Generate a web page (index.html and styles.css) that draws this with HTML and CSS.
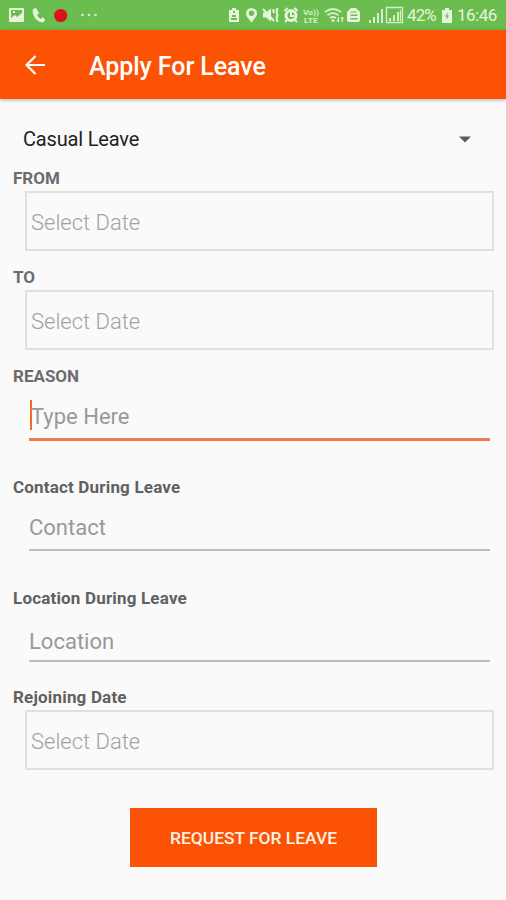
FILE: index.html
```
<!DOCTYPE html>
<html lang="en">
<head>
    <meta charset="UTF-8">
    <meta name="viewport" content="width=device-width, initial-scale=1.0">
    <title>Apply For Leave</title>
    <link rel="stylesheet" href="styles.css">
</head>
<body>
    <div class="statusbar">
        <svg class="status-icons" width="104" height="30" viewBox="0 0 104 30">
            <path fill="#e4f5dc" fill-rule="evenodd" d="M10 8h13a1 1 0 0 1 1 1v12a1 1 0 0 1-1 1H10a1 1 0 0 1-1-1V9a1 1 0 0 1 1-1zm1 2v8l4-3 2 2 5-4v-3zm2 1h2v2h-2z"/>
            <path fill="#e4f5dc" d="M33 9l3-1 3 5-2 2c1 2 2 3 4 4l2-2 2 3-1 2c-6 2-13-7-11-13z"/>
            <circle cx="60.7" cy="15.5" r="6.6" fill="#d9141e"/>
            <g fill="#d5efca"><circle cx="82.5" cy="15" r="1.3"/><circle cx="89" cy="15" r="1.3"/><circle cx="95.5" cy="15" r="1.3"/></g>
        </svg>
        <div class="status-right">
            <svg class="status-icons" width="180" height="30" viewBox="226 0 180 30">
                <!-- battery saver -->
                <path fill="#e4f5dc" fill-rule="evenodd" d="M232 8h4v2h3v12h-10V10h3zm1 3v2h2v-2zm-1 4v2h4v-2zm-1 3v2h6v-2z"/>
                <!-- location -->
                <path fill="#e4f5dc" fill-rule="evenodd" d="M251.5 8a5.5 5.5 0 0 1 5.500 5.500c0 3-3.500 6-5.500 9c-2-3-5.500-6-5.500-9a5.500 5.500 0 0 1 5.500-5.500zm0 2.500a2.700 2.700 0 1 0 0 5.400a2.700 2.700 0 0 0 0-5.400z"/>
                <!-- sound off -->
                <path fill="#e4f5dc" d="M263 12.500h3l5-4v13l-5-4h-3z"/>
                <path fill="none" stroke="#e4f5dc" stroke-width="2" d="M263 9l11 12M273.500 9v4M277.500 8l-1 4 1 3-1 3 1 4"/>
                <!-- alarm -->
                <circle cx="291" cy="15.500" r="5" fill="none" stroke="#e4f5dc" stroke-width="3"/>
                <path fill="none" stroke="#e4f5dc" stroke-width="2" d="M284.500 11l3-3M297.500 11l-3-3M287 20l-2 2M295 20l2 2M291 12v4h3"/>
                <text class="lte" x="303" y="14.500" textLength="16" lengthAdjust="spacingAndGlyphs">Vo))</text>
                <text class="lte" x="304" y="22.500" textLength="14" lengthAdjust="spacingAndGlyphs">LTE</text>
                <!-- wifi -->
                <path fill="none" stroke="#d5efca" stroke-width="1.800" d="M325 12q8-6 16 0M327.500 15.200q5.500-4 11 0M330 18q3-2 6 0"/>
                <circle cx="333" cy="20.500" r="1.500" fill="#d5efca"/>
                <path fill="none" stroke="#e4f5dc" stroke-width="1.200" d="M338.500 17v5M337 20l1.500 2M342 22v-5M343.500 19l-1.500-2"/>
                <!-- data saver -->
                <path fill="#e4f5dc" fill-rule="evenodd" d="M351 8h5l4 4v8a2 2 0 0 1-2 2h-9a2 2 0 0 1-2-2v-8zm-.5 3.500v1h6v-1zm0 3v1.500h7v-1.500zm0 3.500v1.500h7v-1.500z"/>
                <!-- signal -->
                <path fill="#d5efca" d="M369 20h2v3h-2zM373 17h2v6h-2zM377 13h2v10h-2zM381 9h2v14h-2zM389 18h2v3h-2zM393 15h2v6h-2zM397 12h2v9h-2z"/>
                <path fill="none" stroke="#d5efca" stroke-width="1.300" d="M386.500 7.500h16v15h-16zM400.500 10v11"/>
            </svg>
            <span class="percent">42%</span>
            <svg class="battery" width="10" height="15" viewBox="0 0 10 15">
                <path fill="#e4f5dc" fill-rule="evenodd" d="M3 0h4v2h3v13H0V2h3zm2.700 4L3 8.800h1.800L4.400 12 7 7.500H5.300z"/>
            </svg>
            <span class="clock">16:46</span>
        </div>
    </div>

    <header class="appbar">
        <svg class="back" width="20" height="20" viewBox="0 0 20 20">
            <path fill="none" stroke="#fff" stroke-width="2.200" d="M20 10H2M10.500 1L1.500 10l9 9"/>
        </svg>
        <h1>Apply For Leave</h1>
    </header>

    <main class="form">
        <div class="spinner">
            <span>Casual Leave</span>
            <svg width="12" height="7" viewBox="0 0 12 7"><path fill="#5c5c5c" d="M0 .5h12l-6 6z"/></svg>
        </div>

        <div class="field">
            <div class="label caps">FROM</div>
            <div class="datebox">Select Date</div>
        </div>
        <div class="field">
            <div class="label caps">TO</div>
            <div class="datebox">Select Date</div>
        </div>
        <div class="field reason">
            <div class="label caps">REASON</div>
            <div class="line active"><i class="caret"></i><span>Type Here</span></div>
        </div>
        <div class="field contact">
            <div class="label">Contact During Leave</div>
            <div class="line">Contact</div>
        </div>
        <div class="field location">
            <div class="label">Location During Leave</div>
            <div class="line">Location</div>
        </div>
        <div class="field rejoin">
            <div class="label">Rejoining Date</div>
            <div class="datebox">Select Date</div>
        </div>

        <button class="submit">REQUEST FOR LEAVE</button>
    </main>
</body>
</html>
```
FILE: styles.css
```
* {
    box-sizing: border-box;
}
body {
    margin: 0;
    height: 900px;
    overflow: hidden;
    background-color: #fafafa;
    font-family: Roboto, sans-serif;
}
.statusbar {
    display: flex;
    justify-content: space-between;
    height: 30px;
    background-color: #6cbd50;
    color: #e4f5dc;
}
.status-right {
    display: flex;
    align-items: center;
    padding-right: 9px;
    font-size: 17px;
    line-height: 34px;
}
.percent {
    width: 31px;
    margin-left: 1px;
    letter-spacing: -0.9px;
}
.battery {
    margin: 0 5px 0 4px;
}
.clock {
    width: 40px;
    letter-spacing: -0.5px;
}
.lte {
    font-size: 8px;
    font-weight: 700;
    fill: #d5efca;
}
.appbar {
    display: flex;
    align-items: center;
    height: 69px;
    padding-top: 1px;
    padding-left: 25px;
    background-color: #fc5204;
    box-shadow: 0 1px 4px rgba(0, 0, 0, 0.3);
}
.appbar h1 {
    margin: 2px 0 0 44px;
    color: #fff;
    font-size: 25px;
    font-weight: 500;
    letter-spacing: -0.07px;
    white-space: nowrap;
}
.form {
    padding: 0 12px 0 13px;
}
.spinner {
    display: flex;
    justify-content: space-between;
    align-items: center;
    height: 65px;
    padding: 15px 23px 0 10px;
    color: #222;
    font-size: 20px;
    letter-spacing: -0.17px;
}
.field {
    margin-bottom: 12px;
}
.label {
    height: 27px;
    padding-top: 1px;
    line-height: 27px;
    color: #616161;
    font-size: 17px;
    font-weight: 700;
    letter-spacing: 0.18px;
}
.caps {
    letter-spacing: 0;
    color: #6c6c6c;
}
.datebox {
    height: 60px;
    margin-left: 12px;
    padding-left: 4px;
    border: 2px solid #e0e1da;
    color: #a2a2a2;
    font-size: 22px;
    font-weight: 300;
    line-height: 59px;
}
.line {
    display: flex;
    height: 51px;
    margin: 0 4px 0 16px;
    border-bottom: 2px solid #bdbdbd;
    color: #999;
    font-size: 22px;
    line-height: 55px;
}
.line.active {
    height: 52px;
    border-bottom: 3px solid #f07a4c;
}
.caret {
    width: 2px;
    height: 30px;
    margin: 11px -1px 0 1px;
    background-color: #ee6c28;
}
.reason {
    margin-bottom: 32px;
}
.contact {
    margin-bottom: 33px;
}
.location {
    margin-bottom: 21px;
}
.location .line {
    line-height: 61px;
}
.rejoin {
    margin-bottom: 38px;
}
.submit {
    display: block;
    width: 247px;
    height: 59px;
    margin-left: 117px;
    padding: 0;
    border: none;
    background-color: #fc5204;
    color: #fff1e6;
    font-family: inherit;
    font-size: 17.4px;
    font-weight: 500;
}
```
